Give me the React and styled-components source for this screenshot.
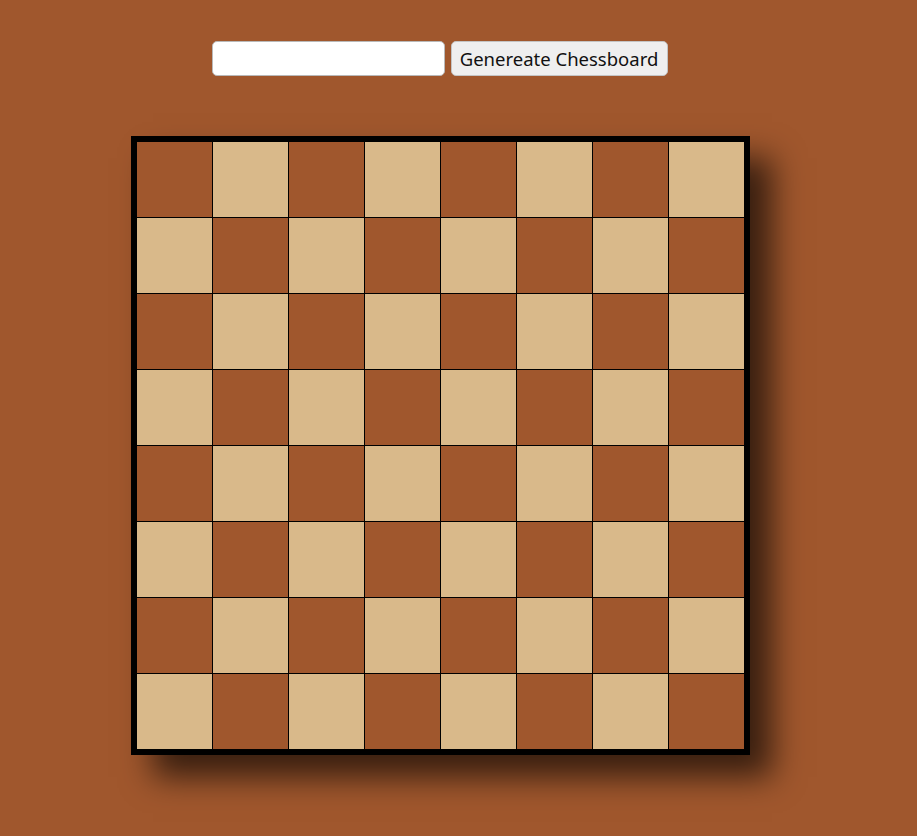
import React from "react";
import styled, { createGlobalStyle } from "styled-components";

const Global = createGlobalStyle`
  html, body { margin: 0; padding: 0; background: #a0572d; }
  body { min-height: 836px; font-family: "Noto Sans", "Open Sans", sans-serif; }
`;

const Page = styled.div`
  width: 881px;
  display: flex;
  flex-direction: column;
  align-items: center;
  padding-top: 41px;
`;

const Controls = styled.form`
  display: flex;
  align-items: center;
  gap: 6px;
  margin: 0;
  padding-right: 2px;
`;

const SizeInput = styled.input`
  box-sizing: border-box;
  width: 233px;
  height: 35px;
  border: 1px solid #b9b9b9;
  border-radius: 5px;
  background: #fff;
  padding: 0 8px;
  font-size: 18px;
  font-family: inherit;
  outline: none;
`;

const Button = styled.button`
  box-sizing: border-box;
  width: 217px;
  height: 35px;
  border: 1px solid #c4c4c4;
  border-radius: 5px;
  background: #efefef;
  color: #111;
  font-family: inherit;
  font-size: 18.5px;
  padding: 0;
  cursor: pointer;
`;

const Board = styled.div`
  margin-top: 60px;
  border: 6px solid #000;
  background: #000;
  display: grid;
  grid-template-columns: repeat(8, 75px);
  grid-auto-rows: 75px;
  gap: 1px;
  box-shadow: 22px 22px 30px rgba(0, 0, 0, 0.65);
`;

const Square = styled.div`
  background: ${(p) => (p.$dark ? "#a0572d" : "#d9b98a")};
`;

export default function App() {
  const cells = [];
  for (let r = 0; r < 8; r++) {
    for (let c = 0; c < 8; c++) {
      cells.push(<Square key={`${r}-${c}`} $dark={(r + c) % 2 === 0} />);
    }
  }
  return (
    <>
      <Global />
      <Page>
        <Controls onSubmit={(e) => e.preventDefault()}>
          <SizeInput type="text" />
          <Button type="submit">Genereate Chessboard</Button>
        </Controls>
        <Board>{cells}</Board>
      </Page>
    </>
  );
}
